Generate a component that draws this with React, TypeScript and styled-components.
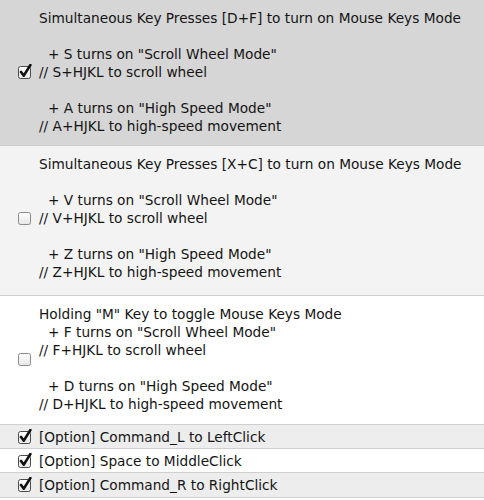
import styled, { createGlobalStyle } from 'styled-components';

const GlobalStyle = createGlobalStyle`
  body {
    margin: 0;
    background: #ffffff;
    font-family: 'DejaVu Sans', 'Liberation Sans', sans-serif;
    color: #141414;
  }
`;

type Tone = 'selected' | 'light' | 'plain' | 'stripe';

const toneColor: Record<Tone, string> = {
  selected: '#d6d6d6',
  light: '#f3f3f3',
  plain: '#ffffff',
  stripe: '#ededed',
};

const List = styled.div`
  display: flex;
  flex-direction: column;
  width: 484px;
`;

const Row = styled.div<{ $tone: Tone; $compact?: boolean; $extra?: number }>`
  display: flex;
  align-items: center;
  background: ${({ $tone }) => toneColor[$tone]};
  border-bottom: 1px solid #cfcfcf;
  padding: ${({ $compact, $extra = 0 }) => ($compact ? '0' : `9px 0 ${10 + $extra}px`)};
  height: ${({ $compact, $extra = 0 }) => ($compact ? `${23 + $extra}px` : 'auto')};
`;

const CheckCell = styled.div`
  width: 39px;
  flex: none;
  display: flex;
  padding-left: 17px;
  box-sizing: border-box;
`;

const Text = styled.div`
  font-size: 13.7px;
  line-height: 18px;
  white-space: pre;
`;

const Line = styled.div<{ $indent?: boolean }>`
  height: 18px;
  padding-left: ${({ $indent }) => ($indent ? '9px' : '0')};
`;

const Box = ({ checked }: { checked: boolean }) => (
  <svg width="16" height="16" viewBox="0 0 16 16">
    <defs>
      <linearGradient id={checked ? 'gc' : 'gu'} x1="0" y1="0" x2="0" y2="1">
        <stop offset="0" stopColor="#ffffff" />
        <stop offset="1" stopColor="#e6e6e6" />
      </linearGradient>
    </defs>
    <rect
      x="1.5"
      y="2.5"
      width="12"
      height="12"
      rx="2"
      fill={`url(#${checked ? 'gc' : 'gu'})`}
      stroke={checked ? '#4a4a4a' : '#8a8a8a'}
      strokeWidth="1"
    />
    {checked && (
      <path
        d="M4 8 L6.8 11.6 L13.4 1"
        fill="none"
        stroke="#111"
        strokeWidth="2.6"
        strokeLinecap="round"
        strokeLinejoin="round"
      />
    )}
  </svg>
);

type Entry = {
  title: string;
  checked: boolean;
  tone: Tone;
  extra?: number;
  lines: [string, boolean][];
};

const blocks: Entry[] = [
  {
    title: 'Simultaneous Key Presses [D+F] to turn on Mouse Keys Mode',
    checked: true,
    tone: 'selected',
    lines: [
      ['', false],
      ['+ S turns on "Scroll Wheel Mode"', true],
      ['// S+HJKL to scroll wheel', false],
      ['', false],
      ['+ A turns on "High Speed Mode"', true],
      ['// A+HJKL to high-speed movement', false],
    ],
  },
  {
    title: 'Simultaneous Key Presses [X+C] to turn on Mouse Keys Mode',
    checked: false,
    tone: 'light',
    extra: 4,
    lines: [
      ['', false],
      ['+ V turns on "Scroll Wheel Mode"', true],
      ['// V+HJKL to scroll wheel', false],
      ['', false],
      ['+ Z turns on "High Speed Mode"', true],
      ['// Z+HJKL to high-speed movement', false],
    ],
  },
  {
    title: 'Holding "M" Key to toggle Mouse Keys Mode',
    checked: false,
    tone: 'plain',
    extra: 1,
    lines: [
      ['+ F turns on "Scroll Wheel Mode"', true],
      ['// F+HJKL to scroll wheel', false],
      ['', false],
      ['+ D turns on "High Speed Mode"', true],
      ['// D+HJKL to high-speed movement', false],
    ],
  },
];

const options: { label: string; tone: Tone; extra?: number }[] = [
  { label: '[Option] Command_L to LeftClick', tone: 'stripe' },
  { label: '[Option] Space to MiddleClick', tone: 'plain' },
  { label: '[Option] Command_R to RightClick', tone: 'stripe', extra: 1 },
];

const App = () => {
  return (
    <>
      <GlobalStyle />
      <List>
        {blocks.map((b) => (
          <Row key={b.title} $tone={b.tone} $extra={b.extra}>
            <CheckCell>
              <Box checked={b.checked} />
            </CheckCell>
            <Text>
              <Line>{b.title}</Line>
              {b.lines.map(([t, indent], i) => (
                <Line key={i} $indent={indent}>
                  {t}
                </Line>
              ))}
            </Text>
          </Row>
        ))}
        {options.map((o) => (
          <Row key={o.label} $tone={o.tone} $extra={o.extra} $compact>
            <CheckCell>
              <Box checked />
            </CheckCell>
            <Text>{o.label}</Text>
          </Row>
        ))}
      </List>
    </>
  );
};

export default App;
